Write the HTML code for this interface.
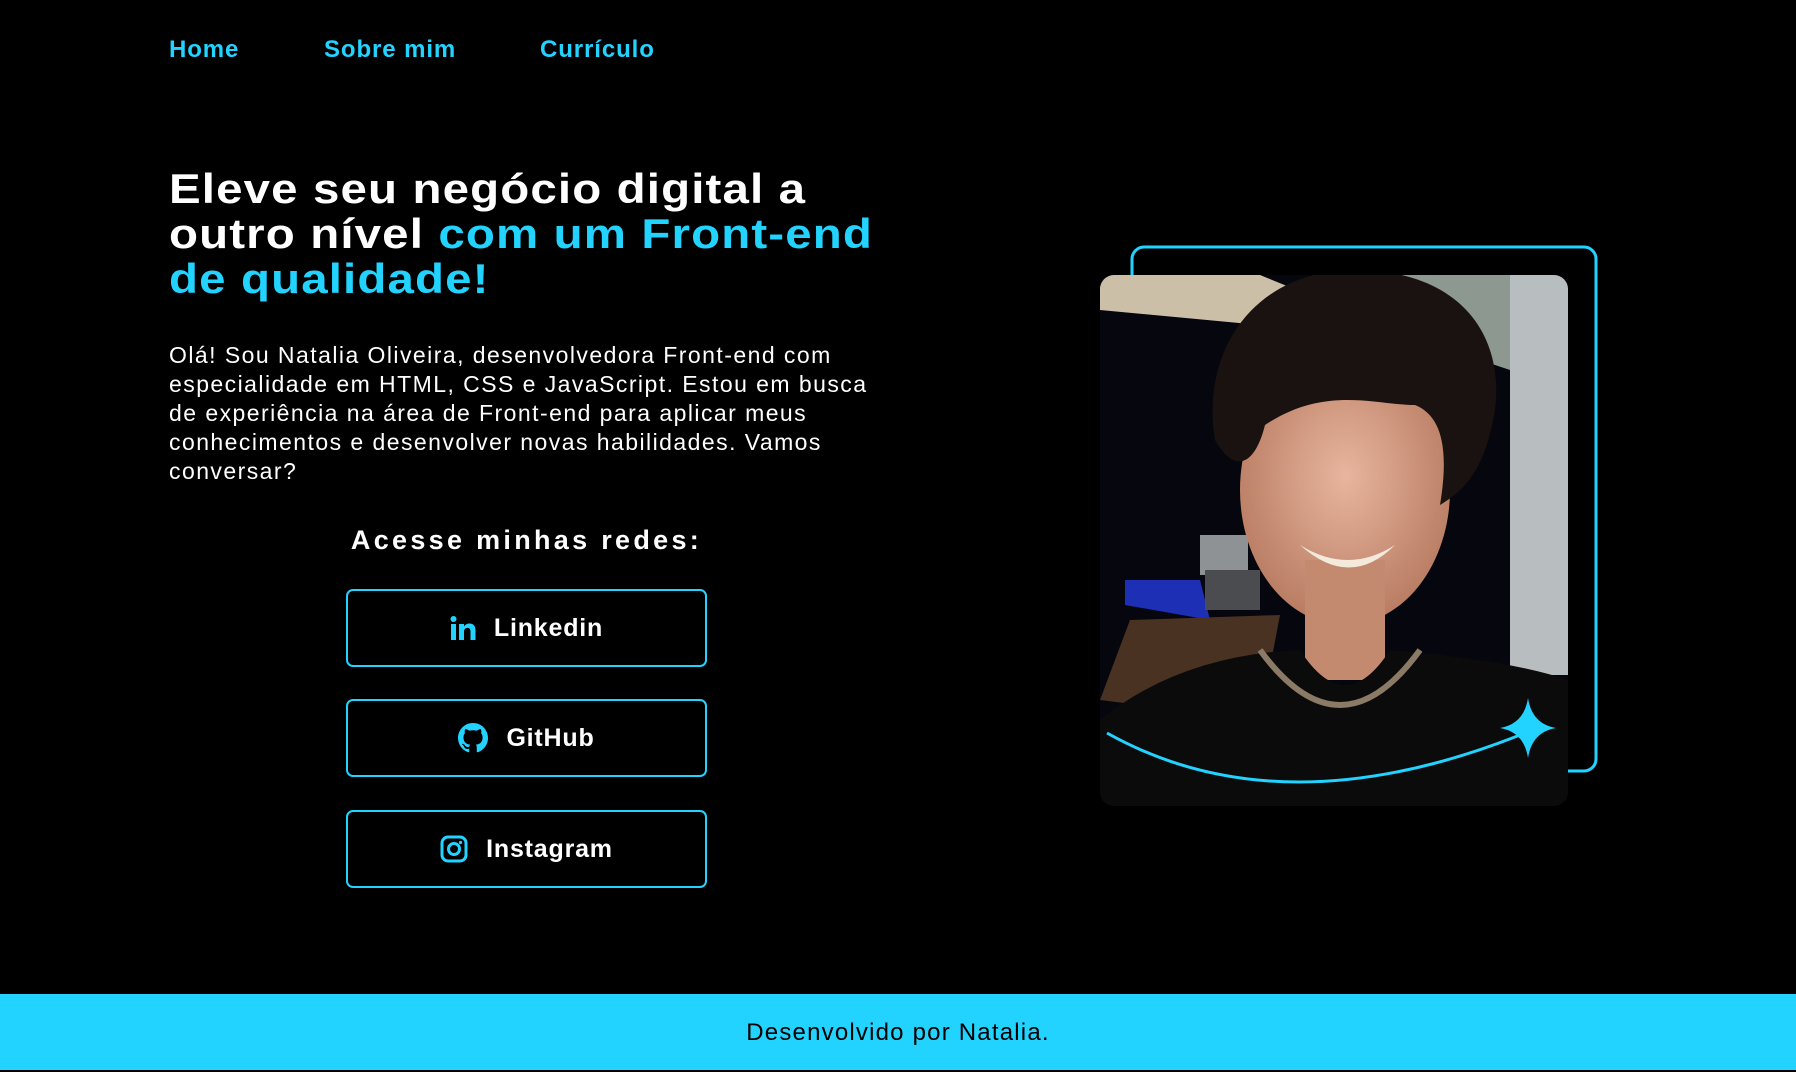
<!DOCTYPE html>
<html><head><meta charset="utf-8"><style>
*{margin:0;padding:0;box-sizing:border-box}
body{width:1796px;height:1070px;background:#000;font-family:"Liberation Sans",sans-serif;color:#fff;position:relative;overflow:hidden}
.nav a{position:absolute;top:36px;color:#22d3ff;font-size:24px;font-weight:bold;text-decoration:none;letter-spacing:0.9px}
h1{position:absolute;left:169px;top:166px;font-size:42px;line-height:45px;font-weight:bold;white-space:nowrap;letter-spacing:1px;transform:scaleX(1.13);transform-origin:0 0}
h1 span{color:#22d3ff}
p.intro{position:absolute;left:169px;top:341px;font-size:23px;line-height:29px;white-space:nowrap;letter-spacing:1.45px}
h2{position:absolute;left:306px;width:441px;text-align:center;top:525px;font-size:27px;font-weight:bold;letter-spacing:3.3px}
.btn{position:absolute;left:346px;width:361px;height:78px;border:2px solid #22d3ff;border-radius:7px;display:flex;align-items:center;justify-content:center;font-size:25px;font-weight:bold;gap:18px;letter-spacing:0.8px}
.btn svg{display:block}
footer{position:absolute;left:0;top:994px;width:1796px;height:76px;background:#22d3ff;color:#000;text-align:center;font-size:24px;line-height:78px;letter-spacing:1.2px}
</style></head><body>
<div class="nav"><a style="left:169px">Home</a><a style="left:324px">Sobre mim</a><a style="left:540px">Currículo</a></div>
<h1>Eleve seu negócio digital a<br>outro nível <span>com um Front-end<br>de qualidade!</span></h1>
<p class="intro">Olá! Sou Natalia Oliveira, desenvolvedora Front-end com<br>especialidade em HTML, CSS e JavaScript. Estou em busca<br>de experiência na área de Front-end para aplicar meus<br>conhecimentos e desenvolver novas habilidades. Vamos<br>conversar?</p>
<h2>Acesse minhas redes:</h2>
<div class="btn" style="top:589px"><svg width="26" height="24" viewBox="0 0 26 24"><rect x="1" y="8" width="5" height="16" fill="#22d3ff"/><circle cx="3.5" cy="3" r="3" fill="#22d3ff"/><path d="M9 8h5v2.5c1-1.8 3-3 5.5-3 4 0 6 2.5 6 7V24h-5v-8.5c0-2.3-1-3.6-3-3.6s-3.5 1.4-3.5 3.8V24H9z" fill="#22d3ff"/></svg>Linkedin</div>
<div class="btn" style="top:699px"><svg width="30" height="30" viewBox="0 0 16 16"><path fill="#22d3ff" d="M8 0C3.58 0 0 3.58 0 8c0 3.540 2.290 6.530 5.470 7.590.4.07.55-.17.55-.38 0-.19-.01-.82-.01-1.49-2.010.37-2.530-.49-2.690-.94-.09-.23-.48-.94-.82-1.130-.28-.15-.68-.52-.01-.53.63-.01 1.080.58 1.230.82.72 1.210 1.870.87 2.330.66.07-.52.28-.87.51-1.070-1.780-.2-3.640-.89-3.640-3.950 0-.87.31-1.590.82-2.150-.08-.2-.36-1.020.08-2.120 0 0 .67-.21 2.200.82.64-.18 1.320-.27 2-.27.68 0 1.360.09 2 .27 1.530-1.040 2.200-.82 2.200-.82.44 1.100.16 1.920.08 2.120.51.56.82 1.270.82 2.150 0 3.070-1.870 3.750-3.650 3.950.29.25.54.73.54 1.480 0 1.070-.01 1.930-.01 2.200 0 .21.15.46.55.38A8.010 8.010 0 0016 8c0-4.420-3.580-8-8-8z"/></svg>GitHub</div>
<div class="btn" style="top:810px"><svg width="28" height="28" viewBox="0 0 28 28"><rect x="2" y="2" width="24" height="24" rx="6" fill="none" stroke="#22d3ff" stroke-width="3"/><circle cx="14" cy="14" r="5.5" fill="none" stroke="#22d3ff" stroke-width="3"/><circle cx="20.5" cy="7.5" r="1.6" fill="#22d3ff"/></svg>Instagram</div>

<svg style="position:absolute;left:0;top:0" width="1796" height="1070">
<defs>
<clipPath id="cp"><rect x="1100" y="275" width="468" height="531" rx="14"/></clipPath>
<radialGradient id="skin" cx="50%" cy="45%" r="55%"><stop offset="0" stop-color="#e8b59e"/><stop offset="1" stop-color="#b97d63"/></radialGradient>
</defs>
<path d="M1132 275V259a12 12 0 0 1 12-12h440a12 12 0 0 1 12 12v500a12 12 0 0 1-12 12h-17" fill="none" stroke="#22d3ff" stroke-width="3"/>
<g clip-path="url(#cp)">
<rect x="1100" y="275" width="468" height="531" fill="#05060e"/>
<polygon points="1100,275 1260,275 1420,340 1100,310" fill="#cbbfa8"/>
<polygon points="1400,275 1510,275 1510,370 1420,340" fill="#8d9890"/>
<rect x="1510" y="275" width="58" height="400" fill="#b8bdbf"/>
<polygon points="1125,580 1200,580 1210,620 1125,605" fill="#1d2fb5"/>
<rect x="1200" y="535" width="48" height="40" fill="#8f9294"/>
<rect x="1205" y="570" width="55" height="40" fill="#4a4c50"/>
<polygon points="1100,700 1130,620 1280,615 1260,720" fill="#4a3222"/>
<ellipse cx="1345" cy="490" rx="105" ry="135" fill="url(#skin)"/>
<rect x="1305" y="560" width="80" height="120" fill="#c48a70"/>
<path d="M1215 440c-15-90 40-170 140-170s150 60 140 140c-10 60-30 80-55 95 10-60 0-90-25-100-40 0-90-20-150 20-10 40-30 50-50 15z" fill="#1a1210"/>
<path d="M1300 545q48 30 95 0q-45 45-95 0z" fill="#f4eadc"/>
<path d="M1100 720q80-65 200-70q45 70 90 0q120 10 178 30v130h-468z" fill="#0c0b0c"/>
<path d="M1260 650q80 110 160 0" fill="none" stroke="#8a7a66" stroke-width="6"/>
</g>
<path d="M1107 733Q1280 830 1520 735" fill="none" stroke="#22d3ff" stroke-width="3"/>
<path d="M1528 698Q1532 724 1556 728Q1532 732 1528 758Q1524 732 1500 728Q1524 724 1528 698z" fill="#22d3ff"/>
</svg>
<footer>Desenvolvido por Natalia.</footer>
</body></html>
